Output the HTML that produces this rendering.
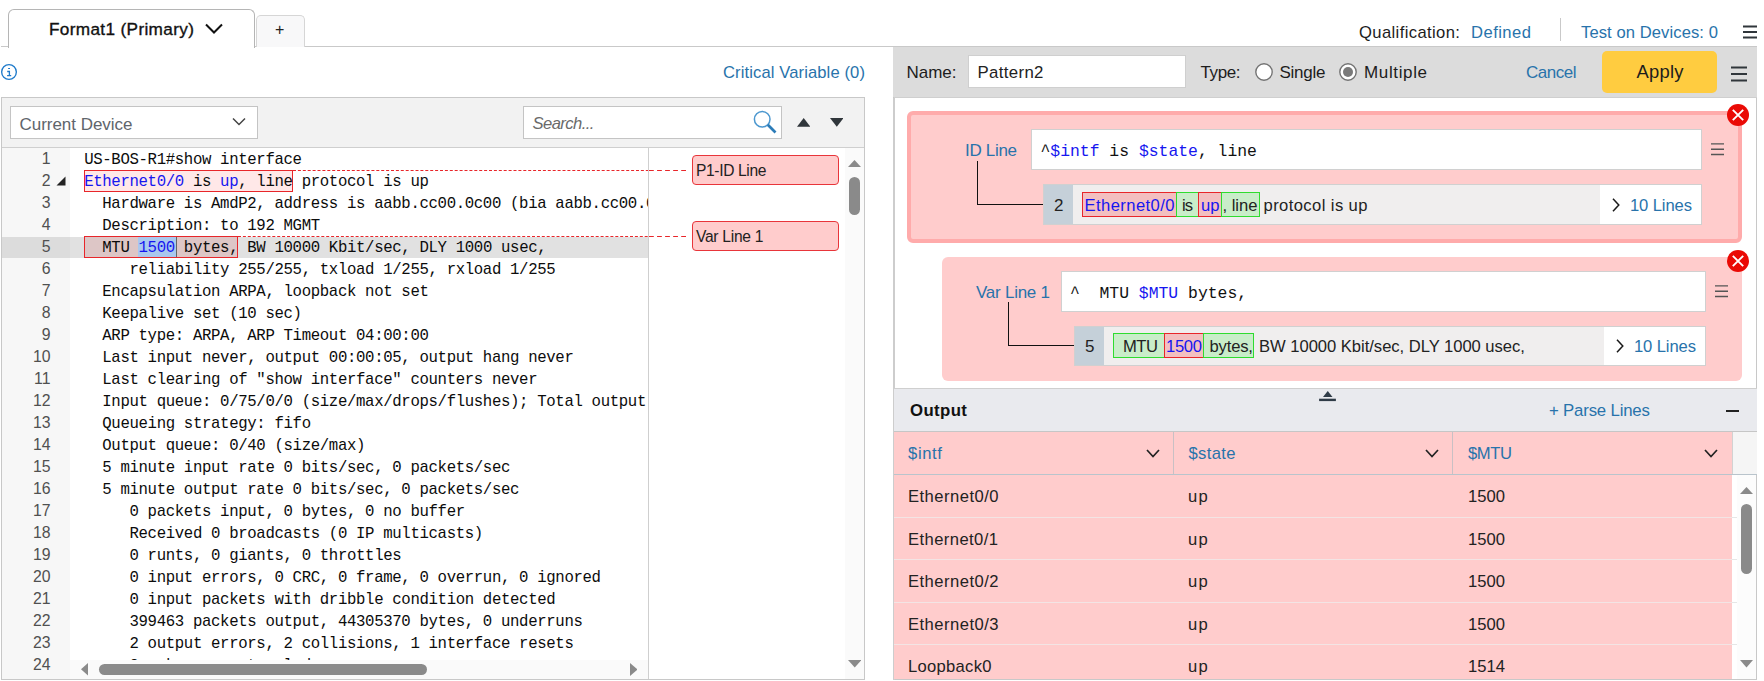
<!DOCTYPE html>
<html>
<head>
<meta charset="utf-8">
<style>
*{box-sizing:border-box;margin:0;padding:0}
html,body{width:1764px;height:681px;overflow:hidden;background:#fff}
body{font-family:"Liberation Sans",sans-serif;font-size:16px;color:#222;position:relative}
.abs{position:absolute}
.t{position:absolute;white-space:pre;line-height:20px}
.mono{font-family:"Liberation Mono",monospace}
.ln{position:absolute;left:2px;width:48.5px;text-align:right;font-size:15.8px;color:#505050;line-height:22px;height:22px}
.cl{position:absolute;left:14.2px;font-family:"Liberation Mono",monospace;font-size:15.7px;letter-spacing:-0.353px;line-height:22px;height:22px;white-space:pre;color:#0c0c0c}
.v{color:#1616f0}
</style>
</head>
<body>
<div class="abs" style="left:1px;top:46px;width:1756px;height:1px;background:#c9c9c9;"></div>
<div class="abs" style="left:8px;top:9px;width:247px;height:39px;background:#fff;border:1px solid #b5b5b5;border-radius:6px 6px 0 0;border-bottom:none;"></div>
<div class="t" style="left:49.00px;top:19.00px;font-size:17.2px;color:#111;line-height:20px;letter-spacing:0.343px;-webkit-text-stroke:0.35px #111;">Format1 (Primary)</div>
<svg class="abs" style="left:204px;top:22px" width="20" height="14" viewBox="0 0 20 14"><path d="M2 2.5 L10 10.5 L18 2.5" fill="none" stroke="#111" stroke-width="2"/></svg>
<div class="abs" style="left:255.5px;top:15px;width:49.5px;height:32px;background:#f8f8f9;border:1px solid #d6d6d6;border-radius:5px 5px 0 0;border-bottom:none;"></div>
<div class="t" style="left:275.00px;top:20.00px;font-size:16px;color:#222;line-height:20px;">+</div>
<div class="t" style="left:1359.00px;top:23.00px;font-size:16.6px;color:#1d1d1d;line-height:20px;letter-spacing:0.387px;">Qualification:</div>
<div class="t" style="left:1471.00px;top:23.00px;font-size:16.6px;color:#2873ab;line-height:20px;letter-spacing:0.464px;">Defined</div>
<div class="abs" style="left:1560px;top:18px;width:1px;height:23px;background:#c9c9c9;"></div>
<div class="t" style="left:1581.00px;top:23.00px;font-size:16.6px;color:#2873ab;line-height:20px;letter-spacing:0.080px;">Test on Devices: 0</div>
<svg class="abs" style="left:1742px;top:25px" width="16" height="14" viewBox="0 0 16 14"><path d="M1 1.5H15M1 7H15M1 12.5H15" stroke="#30363b" stroke-width="1.8"/></svg>
<svg class="abs" style="left:0;top:63px" width="18" height="18" viewBox="0 0 18 18"><circle cx="9" cy="9" r="7.35" fill="none" stroke="#1f7bcb" stroke-width="1.35"/><path d="M7.2 8.5H9.4V12.5M7.1 12.6H11.2" fill="none" stroke="#1f7bcb" stroke-width="1.3"/><path d="M8.1 5.5H10" stroke="#1f7bcb" stroke-width="1.2"/></svg>
<div class="t" style="left:723.00px;top:63.00px;font-size:16.6px;color:#2873ab;line-height:20px;letter-spacing:0.104px;">Critical Variable (0)</div>
<div class="abs" style="left:1px;top:97px;width:864px;height:583px;background:#fff;border:1px solid #c8c8c8;"></div>
<div class="abs" style="left:2px;top:98px;width:862px;height:49px;background:#f2f2f2;"></div>
<div class="abs" style="left:2px;top:147px;width:862px;height:1px;background:#cfcfcf;"></div>
<div class="abs" style="left:10px;top:106px;width:248px;height:33px;background:#fff;border:1px solid #c4c4c4;"></div>
<div class="t" style="left:19.50px;top:115.00px;font-size:17px;color:#60656b;line-height:20px;letter-spacing:-0.029px;">Current Device</div>
<svg class="abs" style="left:232px;top:117px" width="14" height="10" viewBox="0 0 14 10"><path d="M1 1.5 L7 7.5 L13 1.5" fill="none" stroke="#444" stroke-width="1.5"/></svg>
<div class="abs" style="left:523px;top:106px;width:259px;height:33px;background:#fff;border:1px solid #c4c4c4;"></div>
<div class="t" style="left:532.50px;top:114.00px;font-size:16.6px;color:#6a6a6a;line-height:20px;letter-spacing:-0.554px;font-style:italic;">Search...</div>
<svg class="abs" style="left:752px;top:109px" width="26" height="26" viewBox="0 0 26 26"><circle cx="10.2" cy="10.2" r="7.8" fill="none" stroke="#4b97cf" stroke-width="1.5"/><path d="M15.8 15.8 L23.5 23.5" stroke="#2c7cb8" stroke-width="2.7"/></svg>
<svg class="abs" style="left:796.8px;top:118px" width="13.4" height="8.8" viewBox="0 0 14 10" preserveAspectRatio="none"><path d="M0 10 L7 0 L14 10Z" fill="#30363b"/></svg>
<svg class="abs" style="left:829.6px;top:118px" width="13.6" height="8.8" viewBox="0 0 14 10" preserveAspectRatio="none"><path d="M0 0 L7 10 L14 0Z" fill="#30363b"/></svg>
<div class="abs" style="left:2px;top:148px;width:68px;height:531px;background:#f7f7f7;"></div>
<div class="abs" style="left:648px;top:148px;width:1px;height:531px;background:#cfcfcf;"></div>
<div class="abs" style="left:2px;top:237px;width:68px;height:21px;background:#dcdcdc;"></div>
<div class="abs" style="left:70px;top:237px;width:578px;height:21px;background:#e1e1e1;"></div>
<div class="abs" style="left:84px;top:170px;width:209px;height:22px;background:#ffe8e8;border:1px solid #e8262a;"></div>
<div class="abs" style="left:84px;top:236px;width:154px;height:22px;background:rgba(214,150,150,0.35);border:1px solid #e8262a;"></div>
<div class="abs" style="left:138px;top:237px;width:37.5px;height:20px;background:#a9c8ee;"></div>
<div class="abs" style="left:175.5px;top:237px;width:1.5px;height:20px;background:#666;"></div>
<svg class="abs" style="left:293px;top:170px" width="399" height="1"><path d="M0 0.5H355" stroke="#e8262a" stroke-width="1" stroke-dasharray="3 1.9"/><path d="M356 0.5H394" stroke="#e8262a" stroke-width="1" stroke-dasharray="4.8 3.25"/></svg>
<svg class="abs" style="left:238px;top:236px" width="454" height="1"><path d="M0 0.5H410" stroke="#e8262a" stroke-width="1" stroke-dasharray="3 1.9"/><path d="M411 0.5H449" stroke="#e8262a" stroke-width="1" stroke-dasharray="4.8 3.25"/></svg>
<div class="abs" style="left:70px;top:148px;width:578px;height:533px;overflow:hidden">
<div class="cl" style="top:1px">US-BOS-R1#show interface</div>
<div class="cl" style="top:23px"><span class="v">Ethernet0/0</span> is <span class="v">up</span>, line protocol is up</div>
<div class="cl" style="top:45px">  Hardware is AmdP2, address is aabb.cc00.0c00 (bia aabb.cc00.0c00)</div>
<div class="cl" style="top:67px">  Description: to 192 MGMT</div>
<div class="cl" style="top:89px">  MTU <span class="v">1500</span> bytes, BW 10000 Kbit/sec, DLY 1000 usec,</div>
<div class="cl" style="top:111px">     reliability 255/255, txload 1/255, rxload 1/255</div>
<div class="cl" style="top:133px">  Encapsulation ARPA, loopback not set</div>
<div class="cl" style="top:155px">  Keepalive set (10 sec)</div>
<div class="cl" style="top:177px">  ARP type: ARPA, ARP Timeout 04:00:00</div>
<div class="cl" style="top:199px">  Last input never, output 00:00:05, output hang never</div>
<div class="cl" style="top:221px">  Last clearing of &quot;show interface&quot; counters never</div>
<div class="cl" style="top:243px">  Input queue: 0/75/0/0 (size/max/drops/flushes); Total output drops: 0</div>
<div class="cl" style="top:265px">  Queueing strategy: fifo</div>
<div class="cl" style="top:287px">  Output queue: 0/40 (size/max)</div>
<div class="cl" style="top:309px">  5 minute input rate 0 bits/sec, 0 packets/sec</div>
<div class="cl" style="top:331px">  5 minute output rate 0 bits/sec, 0 packets/sec</div>
<div class="cl" style="top:353px">     0 packets input, 0 bytes, 0 no buffer</div>
<div class="cl" style="top:375px">     Received 0 broadcasts (0 IP multicasts)</div>
<div class="cl" style="top:397px">     0 runts, 0 giants, 0 throttles</div>
<div class="cl" style="top:419px">     0 input errors, 0 CRC, 0 frame, 0 overrun, 0 ignored</div>
<div class="cl" style="top:441px">     0 input packets with dribble condition detected</div>
<div class="cl" style="top:463px">     399463 packets output, 44305370 bytes, 0 underruns</div>
<div class="cl" style="top:485px">     2 output errors, 2 collisions, 1 interface resets</div>
<div class="cl" style="top:507px">     0 unknown protocol drops</div>
</div>
<div class="ln" style="top:148px">1</div>
<div class="ln" style="top:170px">2</div>
<div class="ln" style="top:192px">3</div>
<div class="ln" style="top:214px">4</div>
<div class="ln" style="top:236px">5</div>
<div class="ln" style="top:258px">6</div>
<div class="ln" style="top:280px">7</div>
<div class="ln" style="top:302px">8</div>
<div class="ln" style="top:324px">9</div>
<div class="ln" style="top:346px">10</div>
<div class="ln" style="top:368px">11</div>
<div class="ln" style="top:390px">12</div>
<div class="ln" style="top:412px">13</div>
<div class="ln" style="top:434px">14</div>
<div class="ln" style="top:456px">15</div>
<div class="ln" style="top:478px">16</div>
<div class="ln" style="top:500px">17</div>
<div class="ln" style="top:522px">18</div>
<div class="ln" style="top:544px">19</div>
<div class="ln" style="top:566px">20</div>
<div class="ln" style="top:588px">21</div>
<div class="ln" style="top:610px">22</div>
<div class="ln" style="top:632px">23</div>
<div class="ln" style="top:654px">24</div>
<svg class="abs" style="left:56px;top:176px" width="10" height="10" viewBox="0 0 10 10"><path d="M9.5 0.5 V9.5 H0.5Z" fill="#222"/></svg>
<div class="abs" style="left:70px;top:660px;width:578px;height:19px;background:#fafafa;"></div>
<svg class="abs" style="left:81.2px;top:663px" width="7" height="12.6" viewBox="0 0 8 12" preserveAspectRatio="none"><path d="M8 0 V12 L0 6Z" fill="#8a8a8a"/></svg>
<svg class="abs" style="left:629.5px;top:663px" width="7.5" height="13" viewBox="0 0 8 12" preserveAspectRatio="none"><path d="M0 0 V12 L8 6Z" fill="#8a8a8a"/></svg>
<div class="abs" style="left:99px;top:664px;width:328px;height:10.5px;background:#8a8a8a;border-radius:6px;"></div>
<div class="abs" style="left:692px;top:155px;width:147px;height:30px;background:#ffcccc;border:1px solid #e8353a;border-radius:4px;"></div>
<div class="t" style="left:696.00px;top:160.50px;font-size:15.6px;color:#222;line-height:20px;letter-spacing:-0.356px;">P1-ID Line</div>
<div class="abs" style="left:692px;top:221px;width:147px;height:30px;background:#ffcccc;border:1px solid #e8353a;border-radius:4px;"></div>
<div class="t" style="left:696.00px;top:226.50px;font-size:15.6px;color:#222;line-height:20px;letter-spacing:-0.273px;">Var Line 1</div>
<div class="abs" style="left:845px;top:148px;width:19px;height:531px;background:#fafafa;"></div>
<svg class="abs" style="left:848px;top:159px" width="13" height="8" viewBox="0 0 13 8"><path d="M0 8 L6.5 1 L13 8Z" fill="#8a8a8a"/></svg>
<svg class="abs" style="left:847.5px;top:660px" width="13.5" height="7.5" viewBox="0 0 13 8" preserveAspectRatio="none"><path d="M0 0 L6.5 8 L13 0Z" fill="#8a8a8a"/></svg>
<div class="abs" style="left:849px;top:177px;width:11px;height:38px;background:#8a8a8a;border-radius:6px;"></div>
<div class="abs" style="left:893px;top:47px;width:864px;height:633px;background:#fff;border:1px solid #c8c8c8;border-top:none;"></div>
<div class="abs" style="left:893px;top:98px;width:1.5px;height:582px;background:#cdcdcd;"></div>
<div class="abs" style="left:893px;top:47px;width:863.5px;height:50px;background:#dcdcdc;"></div>
<div class="abs" style="left:894px;top:97px;width:862.5px;height:1px;background:#cfcfcf;"></div>
<div class="t" style="left:906.50px;top:63.00px;font-size:17px;color:#1d1d1d;line-height:20px;letter-spacing:-0.018px;">Name:</div>
<div class="abs" style="left:968px;top:55px;width:218px;height:33px;background:#fff;border:1px solid #cfcfcf;"></div>
<div class="t" style="left:977.50px;top:63.00px;font-size:16.8px;color:#222;line-height:20px;letter-spacing:0.356px;">Pattern2</div>
<div class="t" style="left:1200.50px;top:63.00px;font-size:17px;color:#1d1d1d;line-height:20px;letter-spacing:-0.395px;">Type:</div>
<svg class="abs" style="left:1254px;top:62px" width="20" height="20" viewBox="0 0 20 20"><circle cx="10" cy="10" r="8.2" fill="#fff" stroke="#747474" stroke-width="1.4"/></svg>
<div class="t" style="left:1279.50px;top:63.00px;font-size:17px;color:#1d1d1d;line-height:20px;letter-spacing:-0.251px;">Single</div>
<svg class="abs" style="left:1338px;top:62px" width="20" height="20" viewBox="0 0 20 20"><circle cx="10" cy="10" r="8.2" fill="#fff" stroke="#747474" stroke-width="1.4"/><circle cx="10" cy="10" r="5" fill="#7a7a7a"/></svg>
<div class="t" style="left:1364.00px;top:63.00px;font-size:17px;color:#1d1d1d;line-height:20px;letter-spacing:0.632px;">Multiple</div>
<div class="t" style="left:1526.00px;top:63.00px;font-size:17px;color:#2873ab;line-height:20px;letter-spacing:-0.483px;">Cancel</div>
<div class="abs" style="left:1602px;top:51px;width:115px;height:42px;background:#ffcc40;border-radius:5px;"></div>
<div class="t" style="left:1636.50px;top:62.00px;font-size:18.4px;color:#1d1d1d;line-height:20px;letter-spacing:0.243px;">Apply</div>
<svg class="abs" style="left:1730px;top:66px" width="18" height="16" viewBox="0 0 18 16"><path d="M1 1.5H17M1 8H17M1 14.5H17" stroke="#30363b" stroke-width="1.8"/></svg>
<div class="abs" style="left:907px;top:111px;width:834.8px;height:132px;background:#ffcccc;border:4px solid #ffabab;border-radius:6px;"></div>
<div class="abs" style="left:1031px;top:129px;width:671px;height:41px;background:#fff;border:1px solid #d0d0d0;"></div>
<div class="t" style="left:965.00px;top:141.00px;font-size:17px;color:#2873ab;line-height:20px;letter-spacing:-0.311px;">ID Line</div>
<div class="t mono" style="left:1040.5px;top:142px;font-size:16.4px;color:#111;line-height:20px">^<span class="v">$intf</span> is <span class="v">$state</span>, line</div>
<svg class="abs" style="left:1710.8px;top:143px" width="13.5" height="13" viewBox="0 0 13.5 13"><path d="M0 0.9H13.5M0 6.2H13.5M0 11.5H13.5" stroke="#555" stroke-width="1.4"/></svg>
<div class="abs" style="left:977px;top:161px;width:67px;height:44px;border-left:1.5px solid #111;border-bottom:1.5px solid #111"></div>
<div class="abs" style="left:1043px;top:184px;width:659px;height:41px;background:#f0eeee;border:1px solid #d0d0d0;"></div>
<div class="abs" style="left:1044px;top:185px;width:29px;height:39px;background:#c5d0d9;"></div>
<div class="t" style="left:1054.00px;top:196.00px;font-size:17px;color:#222;line-height:20px;">2</div>
<div class="abs" style="left:1600px;top:185px;width:101px;height:39px;background:#fff;"></div>
<div class="abs" style="left:1082px;top:192px;width:95px;height:25px;background:#f3bfc0;border:1px solid #e8262a;"></div>
<div class="abs" style="left:1176px;top:192px;width:23px;height:25px;background:#c9edc9;border:1px solid #2fdc2f;"></div>
<div class="abs" style="left:1198px;top:192px;width:24px;height:25px;background:#f3bfc0;border:1px solid #e8262a;"></div>
<div class="abs" style="left:1221px;top:192px;width:39px;height:25px;background:#c9edc9;border:1px solid #2fdc2f;"></div>
<div class="t" style="left:1084.50px;top:196.00px;font-size:16.6px;color:#1616f0;line-height:20px;letter-spacing:0.417px;">Ethernet0/0</div>
<div class="t" style="left:1182.00px;top:196.00px;font-size:16.6px;color:#222;line-height:20px;letter-spacing:-0.988px;">is</div>
<div class="t" style="left:1201.00px;top:196.00px;font-size:16.6px;color:#1616f0;line-height:20px;letter-spacing:0.034px;">up</div>
<div class="t" style="left:1222.50px;top:196.00px;font-size:16.6px;color:#222;line-height:20px;letter-spacing:-0.013px;">, line</div>
<div class="t" style="left:1263.50px;top:196.00px;font-size:16.6px;color:#222;line-height:20px;letter-spacing:0.405px;">protocol is up</div>
<svg class="abs" style="left:1612px;top:198px" width="8" height="14" viewBox="0 0 8 14"><path d="M1 0.8 L6.8 7 L1 13.2" fill="none" stroke="#1a1a1a" stroke-width="1.5"/></svg>
<div class="t" style="left:1630.00px;top:196.00px;font-size:16.6px;color:#2873ab;line-height:20px;letter-spacing:-0.109px;">10 Lines</div>
<svg class="abs" style="left:1727.3px;top:104px" width="22" height="22" viewBox="0 0 22 22"><circle cx="11" cy="11" r="11" fill="#ea0a05"/><path d="M5.8 5.8 L16.2 16.2 M16.2 5.8 L5.8 16.2" stroke="#fff" stroke-width="1.9"/></svg>
<div class="abs" style="left:942px;top:257px;width:799.8px;height:124px;background:#ffcccc;border-radius:6px;"></div>
<div class="abs" style="left:1061px;top:271px;width:645px;height:41px;background:#fff;border:1px solid #d0d0d0;"></div>
<div class="t" style="left:976.00px;top:283.00px;font-size:17px;color:#2873ab;line-height:20px;letter-spacing:-0.248px;">Var Line 1</div>
<div class="t mono" style="left:1070px;top:284px;font-size:16.4px;color:#111;line-height:20px">^  MTU <span class="v">$MTU</span> bytes,</div>
<svg class="abs" style="left:1714.8px;top:285px" width="13.5" height="13" viewBox="0 0 13.5 13"><path d="M0 0.9H13.5M0 6.2H13.5M0 11.5H13.5" stroke="#555" stroke-width="1.4"/></svg>
<div class="abs" style="left:1008px;top:302px;width:67px;height:44px;border-left:1.5px solid #111;border-bottom:1.5px solid #111"></div>
<div class="abs" style="left:1074px;top:326px;width:632px;height:40px;background:#f0eeee;border:1px solid #d0d0d0;"></div>
<div class="abs" style="left:1075px;top:327px;width:29px;height:38px;background:#c5d0d9;"></div>
<div class="t" style="left:1085.00px;top:337.00px;font-size:17px;color:#222;line-height:20px;">5</div>
<div class="abs" style="left:1604px;top:327px;width:101px;height:38px;background:#fff;"></div>
<div class="abs" style="left:1113px;top:333px;width:52px;height:25px;background:#c9edc9;border:1px solid #2fdc2f;"></div>
<div class="abs" style="left:1164px;top:333px;width:40px;height:25px;background:#f3bfc0;border:1px solid #e8262a;"></div>
<div class="abs" style="left:1203px;top:333px;width:51.2px;height:25px;background:#c9edc9;border:1px solid #2fdc2f;"></div>
<div class="t" style="left:1123.00px;top:337.00px;font-size:16.6px;color:#222;line-height:20px;letter-spacing:-0.478px;">MTU</div>
<div class="t" style="left:1166.00px;top:337.00px;font-size:16.6px;color:#1616f0;line-height:20px;letter-spacing:-0.310px;">1500</div>
<div class="t" style="left:1209.50px;top:337.00px;font-size:16.6px;color:#222;line-height:20px;letter-spacing:-0.158px;">bytes,</div>
<div class="t" style="left:1259.00px;top:337.00px;font-size:16.6px;color:#222;line-height:20px;letter-spacing:-0.031px;">BW 10000 Kbit/sec, DLY 1000 usec,</div>
<svg class="abs" style="left:1616px;top:339px" width="8" height="14" viewBox="0 0 8 14"><path d="M1 0.8 L6.8 7 L1 13.2" fill="none" stroke="#1a1a1a" stroke-width="1.5"/></svg>
<div class="t" style="left:1634.00px;top:337.00px;font-size:16.6px;color:#2873ab;line-height:20px;letter-spacing:-0.109px;">10 Lines</div>
<svg class="abs" style="left:1727.3px;top:250px" width="22" height="22" viewBox="0 0 22 22"><circle cx="11" cy="11" r="11" fill="#ea0a05"/><path d="M5.8 5.8 L16.2 16.2 M16.2 5.8 L5.8 16.2" stroke="#fff" stroke-width="1.9"/></svg>
<div class="abs" style="left:894px;top:388px;width:862.5px;height:1px;background:#cfcfcf;"></div>
<div class="abs" style="left:894px;top:389px;width:862.5px;height:42px;background:#e9eaee;"></div>
<div class="abs" style="left:894px;top:431px;width:862.5px;height:1px;background:#c6c6c6;"></div>
<svg class="abs" style="left:1318px;top:390px" width="18" height="12" viewBox="0 0 18 12"><path d="M5 6.9 L9.75 0.9 L14.5 6.9Z" fill="#2f3b47"/><path d="M1.1 9.9H17.9" stroke="#2f3b47" stroke-width="2.4"/></svg>
<div class="t" style="left:910.00px;top:401.00px;font-size:16.8px;color:#111;line-height:20px;letter-spacing:0.391px;font-weight:bold;">Output</div>
<div class="t" style="left:1549.00px;top:401.00px;font-size:16.8px;color:#2873ab;line-height:20px;letter-spacing:-0.183px;">+ Parse Lines</div>
<div class="abs" style="left:1726px;top:410px;width:13px;height:2px;background:#222;"></div>
<div class="abs" style="left:894px;top:432px;width:838px;height:247px;background:#ffcccc;"></div>
<div class="abs" style="left:1732px;top:432px;width:24.5px;height:42px;background:#f5f5f5;"></div>
<div class="abs" style="left:1732px;top:432px;width:1px;height:42px;background:#d2d2d2;"></div>
<div class="abs" style="left:894px;top:474px;width:862.5px;height:1px;background:#b9c4cc;"></div>
<div class="abs" style="left:1173px;top:432px;width:1px;height:42px;background:#c9c0c4;"></div>
<div class="abs" style="left:1452px;top:432px;width:1px;height:42px;background:#c9c0c4;"></div>
<div class="t" style="left:908.00px;top:444.00px;font-size:16.6px;color:#2873ab;line-height:20px;letter-spacing:0.655px;">$intf</div>
<div class="t" style="left:1188.50px;top:444.00px;font-size:16.6px;color:#2873ab;line-height:20px;letter-spacing:0.355px;">$state</div>
<div class="t" style="left:1468.00px;top:444.00px;font-size:16.6px;color:#2873ab;line-height:20px;letter-spacing:-0.396px;">$MTU</div>
<svg class="abs" style="left:1146px;top:449px" width="14" height="9" viewBox="0 0 14 9"><path d="M1 1 L7 7.5 L13 1" fill="none" stroke="#222" stroke-width="1.7"/></svg>
<svg class="abs" style="left:1424.5px;top:449px" width="14" height="9" viewBox="0 0 14 9"><path d="M1 1 L7 7.5 L13 1" fill="none" stroke="#222" stroke-width="1.7"/></svg>
<svg class="abs" style="left:1704px;top:449px" width="14" height="9" viewBox="0 0 14 9"><path d="M1 1 L7 7.5 L13 1" fill="none" stroke="#222" stroke-width="1.7"/></svg>
<div class="t" style="left:908.00px;top:487.00px;font-size:16.6px;color:#222;line-height:20px;letter-spacing:0.467px;">Ethernet0/0</div>
<div class="t" style="left:1188.00px;top:487.00px;font-size:16.6px;color:#222;line-height:20px;letter-spacing:1.334px;">up</div>
<div class="t" style="left:1468.00px;top:487.00px;font-size:16.6px;color:#222;line-height:20px;letter-spacing:0.023px;">1500</div>
<div class="t" style="left:908.00px;top:530.00px;font-size:16.6px;color:#222;line-height:20px;letter-spacing:0.417px;">Ethernet0/1</div>
<div class="t" style="left:1188.00px;top:530.00px;font-size:16.6px;color:#222;line-height:20px;letter-spacing:1.334px;">up</div>
<div class="t" style="left:1468.00px;top:530.00px;font-size:16.6px;color:#222;line-height:20px;letter-spacing:0.023px;">1500</div>
<div class="abs" style="left:894px;top:517px;width:838px;height:1px;background:#f3e4e4;"></div>
<div class="abs" style="left:1732px;top:517px;width:5px;height:1px;background:#e6e6e6;"></div>
<div class="t" style="left:908.00px;top:572.00px;font-size:16.6px;color:#222;line-height:20px;letter-spacing:0.467px;">Ethernet0/2</div>
<div class="t" style="left:1188.00px;top:572.00px;font-size:16.6px;color:#222;line-height:20px;letter-spacing:1.334px;">up</div>
<div class="t" style="left:1468.00px;top:572.00px;font-size:16.6px;color:#222;line-height:20px;letter-spacing:0.023px;">1500</div>
<div class="abs" style="left:894px;top:559px;width:838px;height:1px;background:#f3e4e4;"></div>
<div class="abs" style="left:1732px;top:559px;width:5px;height:1px;background:#e6e6e6;"></div>
<div class="t" style="left:908.00px;top:615.00px;font-size:16.6px;color:#222;line-height:20px;letter-spacing:0.467px;">Ethernet0/3</div>
<div class="t" style="left:1188.00px;top:615.00px;font-size:16.6px;color:#222;line-height:20px;letter-spacing:1.334px;">up</div>
<div class="t" style="left:1468.00px;top:615.00px;font-size:16.6px;color:#222;line-height:20px;letter-spacing:0.023px;">1500</div>
<div class="abs" style="left:894px;top:602px;width:838px;height:1px;background:#f3e4e4;"></div>
<div class="abs" style="left:1732px;top:602px;width:5px;height:1px;background:#e6e6e6;"></div>
<div class="t" style="left:908.00px;top:657.00px;font-size:16.6px;color:#222;line-height:20px;letter-spacing:0.284px;">Loopback0</div>
<div class="t" style="left:1188.00px;top:657.00px;font-size:16.6px;color:#222;line-height:20px;letter-spacing:1.334px;">up</div>
<div class="t" style="left:1468.00px;top:657.00px;font-size:16.6px;color:#222;line-height:20px;letter-spacing:0.023px;">1514</div>
<div class="abs" style="left:894px;top:644px;width:838px;height:1px;background:#f3e4e4;"></div>
<div class="abs" style="left:1732px;top:644px;width:5px;height:1px;background:#e6e6e6;"></div>
<div class="abs" style="left:1737px;top:475px;width:19px;height:204px;background:#fcfcfc;"></div>
<svg class="abs" style="left:1740px;top:486px" width="13" height="8" viewBox="0 0 13 8"><path d="M0 8 L6.5 1 L13 8Z" fill="#8a8a8a"/></svg>
<svg class="abs" style="left:1740px;top:660px" width="13" height="7.5" viewBox="0 0 13 8" preserveAspectRatio="none"><path d="M0 0 L6.5 8 L13 0Z" fill="#8a8a8a"/></svg>
<div class="abs" style="left:1741px;top:504px;width:11px;height:70px;background:#8a8a8a;border-radius:6px;"></div>
</body>
</html>
